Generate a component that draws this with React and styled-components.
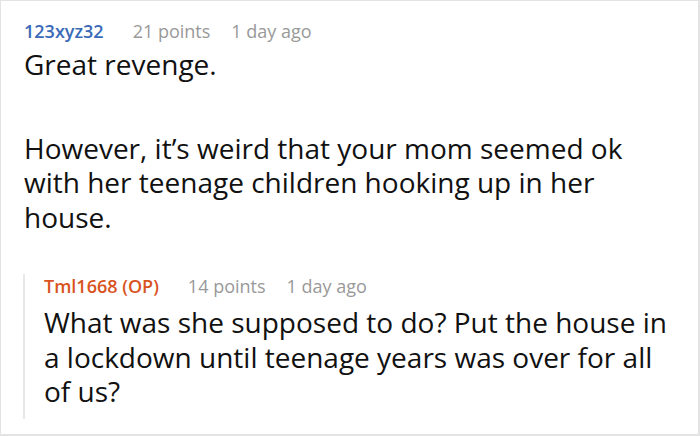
import React from 'react'
import styled, { createGlobalStyle } from 'styled-components'

const GlobalStyle = createGlobalStyle`
  html, body {
    margin: 0;
    padding: 0;
    background: #fff;
  }
  body {
    font-family: "Open Sans", "Noto Sans", sans-serif;
    color: #111;
  }
`

const CommentBox = styled.div`
  width: 700px;
  height: 436px;
  box-sizing: border-box;
  border: 1px solid #e3e3e3;
  border-right-width: 2px;
  border-bottom-width: 2px;
  padding: 18px 30px 0 23px;
  overflow: hidden;
`

const MetaRow = styled.div`
  display: flex;
  align-items: baseline;
  font-size: 18px;
  line-height: 24px;
`

const Author = styled.span`
  font-weight: 600;
  color: ${props => props.$op ? '#d9531e' : '#3a6ab8'};
  margin-right: 29px;
`

const Meta = styled.span`
  color: #999;
  & + & {
    margin-left: 21px;
  }
`

const Body = styled.div`
  font-size: 28px;
  line-height: 34.5px;
  margin-top: 4px;
  > p {
    margin: 0;
  }
  > p + p {
    margin-top: 49px;
  }
`

const Reply = styled.div`
  margin-top: 40px;
  border-left: 2px solid #e8e8e8;
  padding-left: 19px;
  padding-bottom: 10px;
  margin-left: -1px;
`

const ReplyBody = styled(Body)`
  margin-top: 7px;
`

function Comment({ author, op, points, time }) {
  return (
    <MetaRow>
      <Author $op={op}>{author}</Author>
      <Meta>{points} points</Meta>
      <Meta>{time}</Meta>
    </MetaRow>
  )
}

export default function App() {
  return (
    <>
      <GlobalStyle />
      <CommentBox>
        <Comment author="123xyz32" points={21} time="1 day ago" />
        <Body>
          <p>Great revenge.</p>
          <p>However, it’s weird that your mom seemed ok with her teenage children hooking up in her house.</p>
        </Body>
        <Reply>
          <Comment author="Tml1668 (OP)" op points={14} time="1 day ago" />
          <ReplyBody>
            <p>What was she supposed to do? Put the house in a lockdown until teenage years was over for all of us?</p>
          </ReplyBody>
        </Reply>
      </CommentBox>
    </>
  )
}
